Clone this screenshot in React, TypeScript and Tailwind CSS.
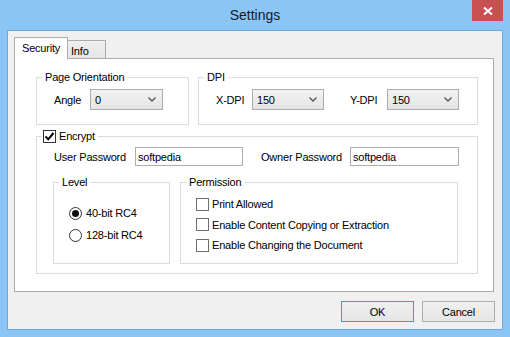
import React from 'react';

function Chevron() {
  return (
    <svg width="8" height="5" viewBox="0 0 8 5" className="shrink-0">
      <polyline points="0.5,0.5 4,4 7.5,0.5" fill="none" stroke="#555" strokeWidth="1.4" />
    </svg>
  );
}

function Combo({ value, className }: { value: string; className: string }) {
  return (
    <div
      className={`${className} h-[21px] flex items-center justify-between border border-[#acacac] bg-gradient-to-b from-[#f2f2f2] to-[#e5e5e5] pl-[4px] pr-[6px]`}
    >
      <span>{value}</span>
      <Chevron />
    </div>
  );
}

function Group({
  label,
  className,
  children,
}: {
  label: React.ReactNode;
  className: string;
  children?: React.ReactNode;
}) {
  return (
    <div className={`relative border border-[#dcdcdc] ${className}`}>
      <div className="absolute left-[5px] top-[-8px] h-[14px] px-[3px] bg-white flex items-center leading-[14px]">
        {label}
      </div>
      {children}
    </div>
  );
}

function CheckBox({ checked, dark }: { checked?: boolean; dark?: boolean }) {
  return (
    <div
      className={`w-[13px] h-[13px] shrink-0 bg-white border flex items-center justify-center ${
        dark ? 'border-[#333]' : 'border-[#707070]'
      }`}
    >
      {checked && (
        <svg width="11" height="11" viewBox="0 0 11 11">
          <polyline points="1.5,5.5 4.2,8.3 9.5,2" fill="none" stroke="#000" strokeWidth="2" />
        </svg>
      )}
    </div>
  );
}

function Radio({ checked }: { checked?: boolean }) {
  return (
    <div className="w-[13px] h-[13px] shrink-0 rounded-full bg-white border border-[#333] flex items-center justify-center">
      {checked && <div className="w-[7px] h-[7px] rounded-full bg-[#111]" />}
    </div>
  );
}

function TextBox({ value, className }: { value: string; className: string }) {
  return (
    <div className={`${className} h-[19px] border border-[#abadb3] bg-white pl-[2px] flex items-center`}>
      {value}
    </div>
  );
}

export default function App() {
  return (
    <div className="w-[510px] h-[337px] bg-[#8ac5f6] flex flex-col font-['Liberation_Sans',Arial,sans-serif] text-[11px] tracking-[-0.2px] text-black leading-[14px] overflow-hidden">
      {/* Barra de título */}
      <div className="relative h-[30px] flex items-center justify-center">
        <span className="text-[14px] tracking-normal text-[#1a1a1a] leading-[18px] -mt-[1px]">Settings</span>
        <div className="absolute right-[7px] top-0 w-[31px] h-[21px] bg-[#c75050] flex items-center justify-center">
          <svg width="10" height="8" viewBox="0 0 10 8">
            <path d="M1 0.5 L9 7.5 M9 0.5 L1 7.5" stroke="#fff" strokeWidth="2" />
          </svg>
        </div>
      </div>

      {/* Área cliente */}
      <div className="ml-[7px] w-[496px] h-[300px] border border-[#6ea8dd] bg-[#f0f0f0] flex flex-col pt-[6px] pl-[6px]">
        {/* Pestañas */}
        <div className="flex items-end h-[21px]">
          <div className="relative z-10 w-[54px] h-[22px] -mb-[1px] bg-white border border-b-0 border-[#acacac] pl-[7px] pt-[3px]">
            Security
          </div>
          <div className="w-[38px] h-[18px] bg-gradient-to-b from-[#f0f0f0] to-[#e5e5e5] border-t border-r border-[#acacac] pl-[3px] pt-[3px]">
            Info
          </div>
        </div>

        {/* Panel */}
        <div className="w-[480px] h-[234px] bg-white border border-[#acacac] flex flex-col">
          <div className="flex gap-[9px] mt-[18px] ml-[21px]">
            <Group label="Page Orientation" className="w-[153px] h-[48px]">
              <div className="flex items-center pt-[11px] pl-[17px]">
                <span className="w-[36px]">Angle</span>
                <Combo value="0" className="w-[73px]" />
              </div>
            </Group>
            <Group label="DPI" className="w-[280px] h-[48px]">
              <div className="flex items-center pt-[11px] pl-[17px]">
                <span className="w-[36px]">X-DPI</span>
                <Combo value="150" className="w-[72px]" />
                <span className="w-[37px] ml-[26px]">Y-DPI</span>
                <Combo value="150" className="w-[72px]" />
              </div>
            </Group>
          </div>

          <Group
            className="w-[442px] h-[138px] mt-[11px] ml-[21px]"
            label={
              <div className="flex items-center gap-[3px] -ml-[2px]">
                <CheckBox checked dark />
                <span>Encrypt</span>
              </div>
            }
          >
            <div className="flex items-center mt-[10px] pl-[17px]">
              <span className="w-[81px]">User Password</span>
              <TextBox value="softpedia" className="w-[108px]" />
              <span className="w-[89px] ml-[18px]">Owner Password</span>
              <TextBox value="softpedia" className="w-[109px]" />
            </div>

            <div className="flex gap-[10px] mt-[16px] pl-[16px]">
              <Group label="Level" className="w-[117px] h-[82px]">
                <div className="flex flex-col gap-[8px] pt-[23px] pl-[15px]">
                  <div className="flex items-center gap-[4px]">
                    <Radio checked />
                    <span>40-bit RC4</span>
                  </div>
                  <div className="flex items-center gap-[4px]">
                    <Radio />
                    <span>128-bit RC4</span>
                  </div>
                </div>
              </Group>
              <Group label="Permission" className="w-[278px] h-[82px]">
                <div className="flex flex-col gap-[6.5px] pt-[14px] pl-[15px]">
                  <div className="flex items-center gap-[3px]">
                    <CheckBox />
                    <span>Print Allowed</span>
                  </div>
                  <div className="flex items-center gap-[3px]">
                    <CheckBox />
                    <span>Enable Content Copying or Extraction</span>
                  </div>
                  <div className="flex items-center gap-[3px]">
                    <CheckBox />
                    <span>Enable Changing the Document</span>
                  </div>
                </div>
              </Group>
            </div>
          </Group>
        </div>

        {/* Botones */}
        <div className="flex justify-end gap-[8px] mt-[9px] pr-[7px]">
          <button className="w-[73px] h-[21px] border border-[#3399ff] bg-gradient-to-b from-[#f0f0f0] to-[#e5e5e5] flex items-center justify-center">
            OK
          </button>
          <button className="w-[73px] h-[21px] border border-[#adadad] bg-gradient-to-b from-[#f0f0f0] to-[#e5e5e5] flex items-center justify-center">
            Cancel
          </button>
        </div>
      </div>
    </div>
  );
}
